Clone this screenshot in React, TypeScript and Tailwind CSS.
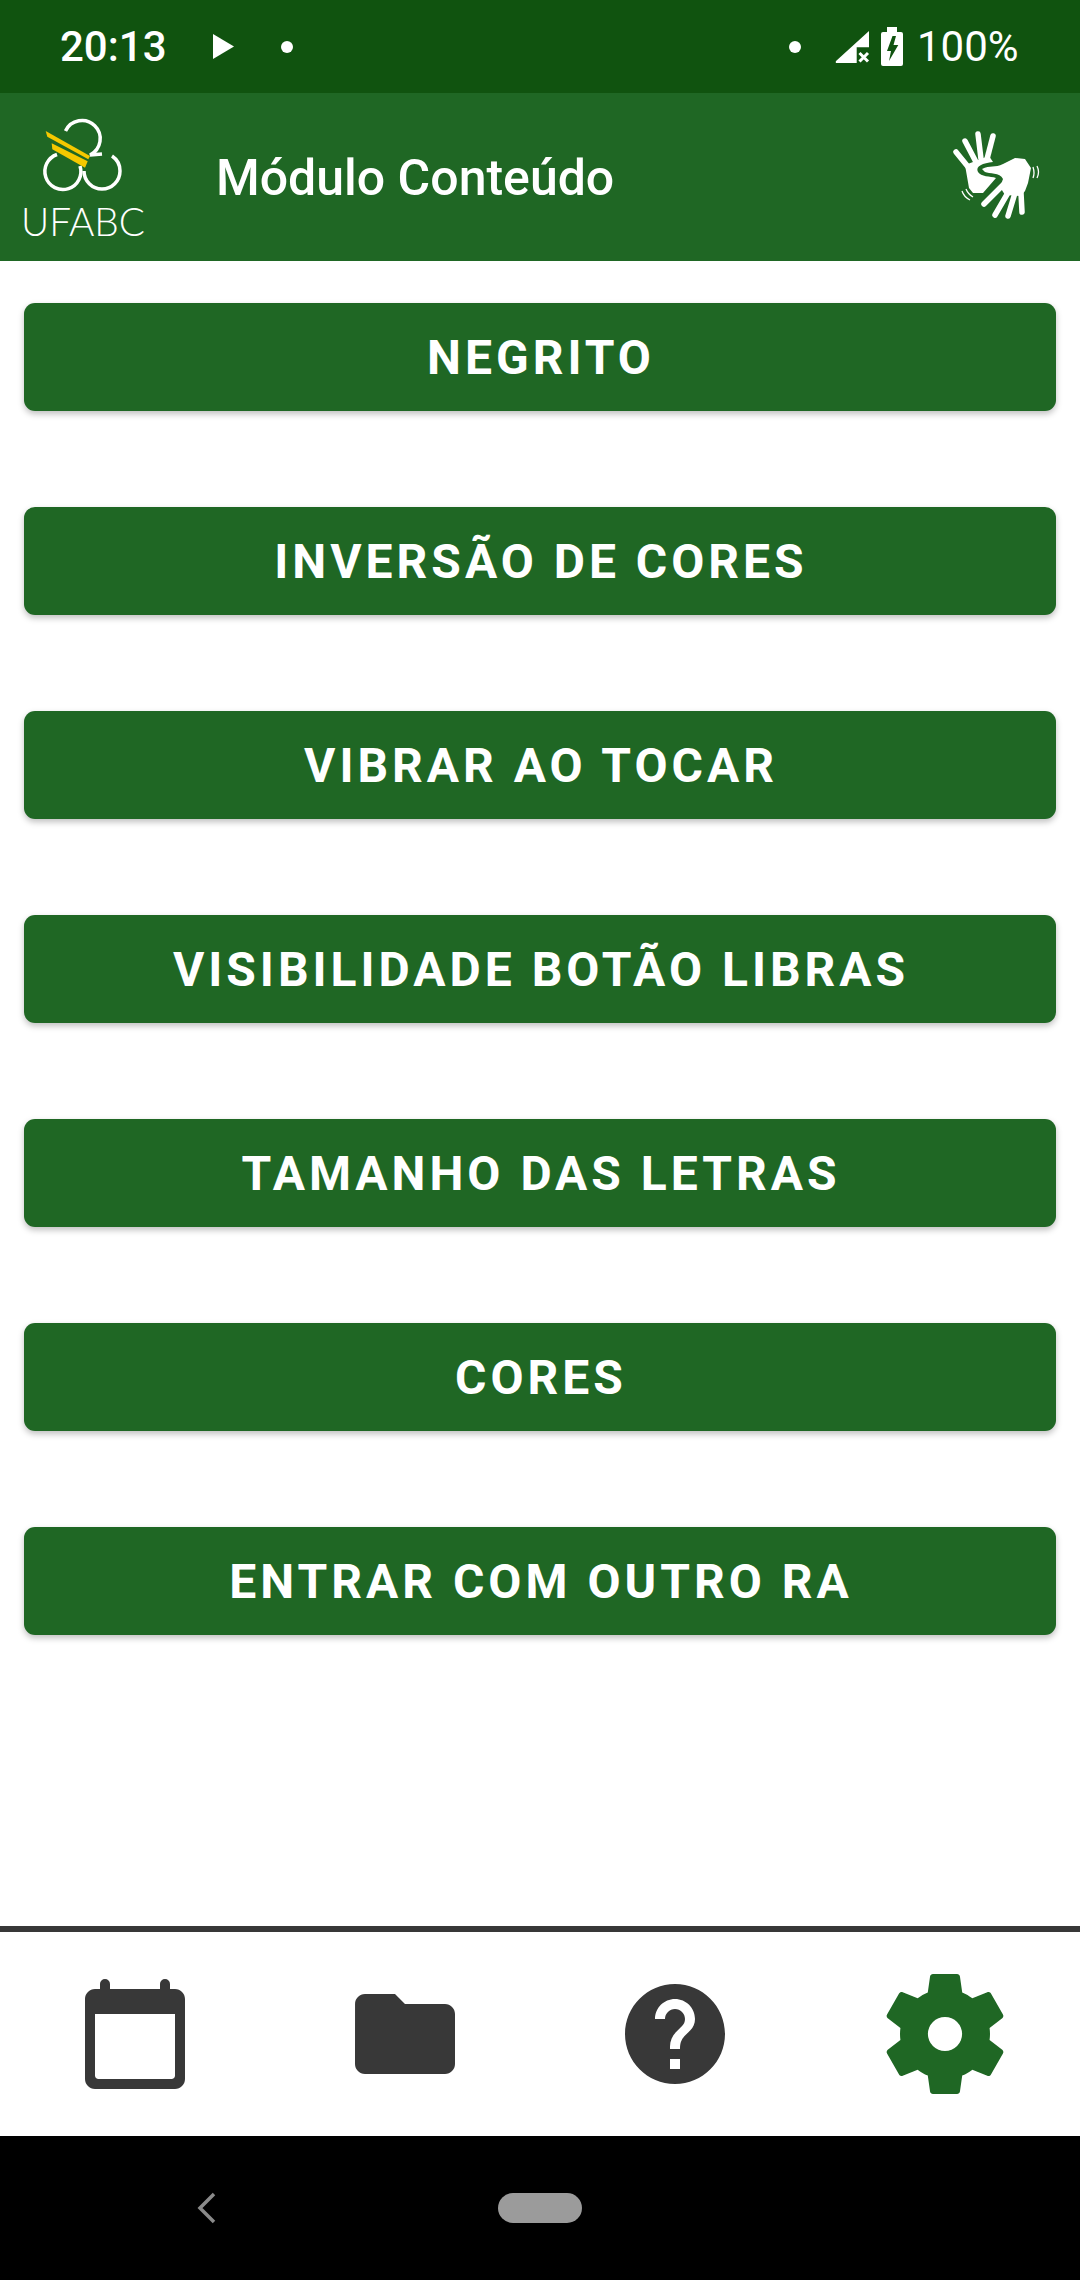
const BUTTONS = [
  'NEGRITO',
  'INVERSÃO DE CORES',
  'VIBRAR AO TOCAR',
  'VISIBILIDADE BOTÃO LIBRAS',
  'TAMANHO DAS LETRAS',
  'CORES',
  'ENTRAR COM OUTRO RA',
];

function Logo() {
  return (
    <svg width="140" height="140" viewBox="0 0 140 140" className="block">
      <g fill="none" stroke="#fff" strokeWidth="3.5" strokeLinecap="butt">
        <path d="M51.500 26 A18.200 18.200 0 1 1 76 50 L88 49" />
        <path d="M43 49.500 A18 18 0 1 0 66 61" />
        <path d="M70 66 A18 18 0 0 0 106 66 A18 18 0 0 0 98 51" />
      </g>
      <path d="M31.700 26 L76 51 L74.300 54.300 L33.300 31.700 Z" fill="#f5c800" />
      <path d="M37.700 38.300 L73.700 56.300 L71 62.700 L38.300 44.300 Z" fill="#f5c800" />
      <text x="7" y="131" fill="#fff" fontFamily="Lato, sans-serif" fontWeight="300" fontSize="40" textLength="124" lengthAdjust="spacingAndGlyphs">UFABC</text>
    </svg>
  );
}

function HandsIcon() {
  return (
    <svg width="100" height="100" viewBox="0 0 100 100" className="block">
      <g fill="none" stroke="#fff" strokeWidth="5.500" strokeLinecap="round">
        <path d="M11 27 L24 43" />
        <path d="M20 16 L31 37" />
        <path d="M33 9 L36 34" />
        <path d="M48 11 L42 34" />
        <path d="M39 79 L58 60" />
        <path d="M50 90 L64 66" />
        <path d="M63 91 L70 68" />
        <path d="M77 87 L76 68" />
      </g>
      <path
        fill="#fff"
        d="M20 40 L44 31 L48 37 C38 38 30 41 33 47 C36 52 45 51 51 53 L38 68 L28 68 L24 63 Z"
      />
      <path
        fill="#fff"
        d="M37 44 C45 40 50 43 58 39 L70 33 L80 34 L86 43 L83 58 L80 66 L76 71 L60 70 L55 62 L58 54 C55 47 44 49 40 47 Z"
      />
      <g fill="none" stroke="#fff" strokeWidth="1.300">
        <path d="M88 42 Q90 48 88 53" />
        <path d="M92 41 Q95 47 92 53" />
        <path d="M17 66 Q19 72 25 75" />
        <path d="M21 64 Q23 69 28 72" />
      </g>
    </svg>
  );
}

function Calendar() {
  return (
    <svg width="120" height="120" viewBox="0 0 24 24" className="block">
      <path
        fill="#383838"
        fillRule="evenodd"
        d="M20 3h-1V2a1 1 0 0 0-2 0v1H7V2a1 1 0 0 0-2 0v1H4c-1.100 0-2 .9-2 2v16c0 1.100.9 2 2 2h16c1.100 0 2-.9 2-2V5c0-1.100-.9-2-2-2zM4 8h16v12.300c0 .4-.3.7-.7.7H4.700c-.4 0-.7-.3-.7-.7V8z"
      />
    </svg>
  );
}

function Folder() {
  return (
    <svg width="120" height="120" viewBox="0 0 24 24" className="block">
      <path
        fill="#383838"
        d="M10 4H4c-1.100 0-1.990.9-1.990 2L2 18c0 1.100.9 2 2 2h16c1.100 0 2-.9 2-2V8c0-1.100-.9-2-2-2h-8l-2-2z"
      />
    </svg>
  );
}

function Help() {
  return (
    <svg width="120" height="120" viewBox="0 0 24 24" className="block">
      <path
        fill="#383838"
        d="M12 2C6.480 2 2 6.480 2 12s4.480 10 10 10 10-4.480 10-10S17.520 2 12 2zm1 17h-2v-2h2v2zm2.070-7.750l-.9.920C13.450 12.900 13 13.500 13 15h-2v-.5c0-1.100.45-2.100 1.170-2.830l1.240-1.260c.37-.36.59-.86.59-1.410 0-1.100-.9-2-2-2s-2 .9-2 2H8c0-2.210 1.790-4 4-4s4 1.790 4 4c0 .88-.36 1.680-.93 2.250z"
      />
    </svg>
  );
}

function Gear() {
  return (
    <svg width="144" height="144" viewBox="0 0 24 24" className="block">
      <path
        fill="#1f6724"
        fillRule="evenodd"
        d="M19.430 12.980c.04-.32.07-.64.07-.98s-.03-.66-.07-.98l2.110-1.650c.19-.15.24-.42.12-.64l-2-3.460c-.12-.22-.39-.3-.61-.22l-2.490 1c-.52-.4-1.080-.73-1.690-.98l-.38-2.650C14.460 2.180 14.250 2 14 2h-4c-.25 0-.46.18-.49.42l-.38 2.650c-.61.25-1.170.59-1.690.98l-2.490-1c-.23-.09-.49 0-.61.22l-2 3.460c-.13.22-.07.49.12.64l2.110 1.650c-.04.32-.07.65-.07.98s.03.66.07.98l-2.110 1.650c-.19.15-.24.42-.12.64l2 3.460c.12.22.39.3.61.22l2.490-1c.52.4 1.080.73 1.690.98l.38 2.650c.03.24.24.42.49.42h4c.25 0 .46-.18.49-.42l.38-2.650c.61-.25 1.170-.59 1.690-.98l2.490 1c.23.09.49 0 .61-.22l2-3.460c.12-.22.07-.49-.12-.64l-2.110-1.650zM12 14.850a2.850 2.850 0 1 1 0-5.700 2.850 2.850 0 0 1 0 5.700z"
      />
    </svg>
  );
}

export default function App() {
  return (
    <div className="flex h-[2280px] w-[1080px] flex-col overflow-hidden bg-white font-['Roboto',sans-serif]">
      <div className="flex h-[93px] shrink-0 items-center bg-[#10530f] text-white">
        <span className="ml-[60px] w-[153px] text-[42px] leading-none font-medium">20:13</span>
        <svg width="21" height="25" viewBox="0 0 21 25" className="block">
          <path d="M0 0 L21 12.500 L0 25 Z" fill="#fff" />
        </svg>
        <span className="ml-[47px] size-[12px] rounded-full bg-white" />
        <span className="ml-[496px] size-[12px] rounded-full bg-white" />
        <svg width="36" height="36" viewBox="0 0 36 36" className="ml-[34px] block">
          <path fill="#fff" d="M34 2 V18.300 H21.700 V34 H2 Q0 34 1 32 Z" />
          <path stroke="#fff" strokeWidth="3" d="M24.500 24 L33 32.500 M33 24 L24.500 32.500" />
        </svg>
        <svg width="22" height="39" viewBox="0 0 22 39" className="ml-[10px] block">
          <path fill="#fff" fillRule="evenodd" d="M6 0 H16 V5 H20 Q22 5 22 7 V37 Q22 39 20 39 H2 Q0 39 0 37 V7 Q0 5 2 5 H6 Z M11.500 9 L15 9 L12.500 18 L17.300 18 L8 34 L10 24 L6 24 Z" />
        </svg>
        <span className="ml-[14px] text-[42px] leading-none">100%</span>
      </div>

      <div className="flex h-[168px] shrink-0 items-start bg-[#1f6724] text-white">
        <div className="ml-[14px] mt-[12px] w-[202px]">
          <Logo />
        </div>
        <span className="mt-[60px] text-[50px] leading-none font-medium">Módulo Conteúdo</span>
        <div className="ml-auto mr-[35px] mt-[32px]">
          <HandsIcon />
        </div>
      </div>

      <div className="flex flex-1 flex-col gap-[96px] px-[24px] pt-[42px]">
        {BUTTONS.map((label) => (
          <button
            key={label}
            className="flex h-[108px] items-center justify-center rounded-[11px] bg-[#1f6724] pl-[2px] pt-[2px] text-[48px] font-bold tracking-[4px] text-white shadow-[0_3px_6px_rgba(0,0,0,0.25)]"
          >
            {label}
          </button>
        ))}
      </div>

      <div className="h-[6px] shrink-0 bg-[#383838]" />
      <div className="grid h-[204px] shrink-0 grid-cols-4 items-center justify-items-center bg-white">
        <Calendar />
        <Folder />
        <Help />
        <Gear />
      </div>

      <div className="flex h-[144px] shrink-0 items-center bg-black">
        <svg width="20" height="32" viewBox="0 0 20 32" className="ml-[197px] block">
          <path d="M17 2 L3 16 L17 30" fill="none" stroke="#8a8a8a" strokeWidth="3.500" />
        </svg>
        <div className="ml-[281px] h-[30px] w-[84px] rounded-full bg-[#9b9b9b]" />
      </div>
    </div>
  );
}
